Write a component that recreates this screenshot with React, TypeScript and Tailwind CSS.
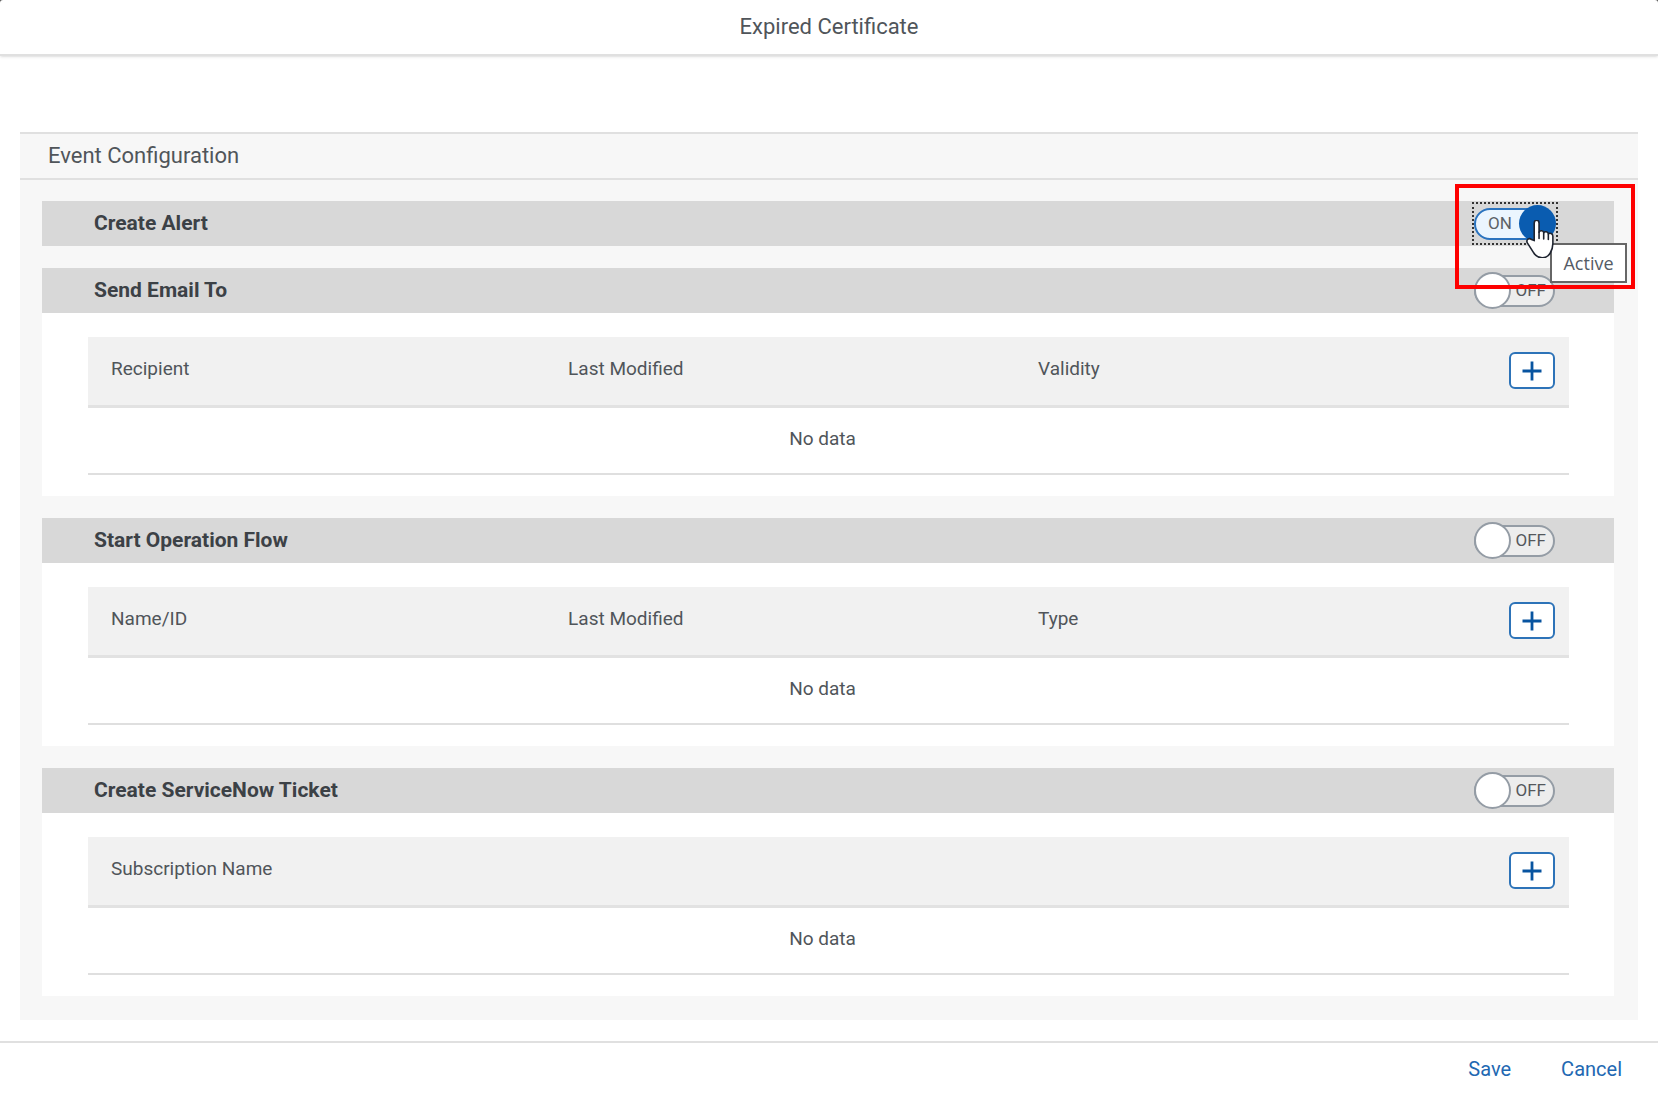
import React, { useState } from "react";

type Section = { title: string; columns: string[] };

const sections: Section[] = [
  { title: "Send Email To", columns: ["Recipient", "Last Modified", "Validity"] },
  { title: "Start Operation Flow", columns: ["Name/ID", "Last Modified", "Type"] },
  { title: "Create ServiceNow Ticket", columns: ["Subscription Name", "", ""] },
];

function Toggle({ label, initial = false }: { label: string; initial?: boolean }) {
  const [on, setOn] = useState(initial);
  return (
    <label className="relative flex h-[37px] w-[81px] cursor-pointer items-center">
      <input
        type="checkbox"
        role="switch"
        aria-label={label}
        checked={on}
        onChange={() => setOn(!on)}
        className="sr-only"
      />
      {on ? (
        <span className="flex h-8 w-full items-center rounded-full border-2 border-[#2a73bf] bg-[#ebf5fe] pl-3 text-[17px] text-[#5b6167]">
          ON
        </span>
      ) : (
        <span className="flex h-8 w-full items-center justify-end rounded-full border-2 border-[#949ca5] bg-[#ededed] pr-[7px] text-[17px] text-[#54585c]">
          OFF
        </span>
      )}
      {on ? (
        <span className="absolute -right-px top-0 size-[37px] rounded-full bg-[#0a5cb0]" />
      ) : (
        <span className="absolute left-0 top-0 size-[37px] rounded-full border-2 border-[#949ca5] bg-white" />
      )}
    </label>
  );
}

function Pointer() {
  return (
    <svg viewBox="0 1 28 36" className="absolute left-[51px] top-[15px] h-[38px] w-[30px]" aria-hidden="true">
      <path
        d="M8.5 20.5V4c0-3.600 4.600-3.600 4.600 0v8.500c.6-1.800 4.200-1.700 4.400.6.900-1.600 4.200-1.200 4.400 1.100 1.300-1.300 4.300-.5 4.300 2.100v7c0 4-.9 6.200-2.600 9.200-1.500 2.700-4 4.300-7.600 4.300-4.200 0-6.500-2-8.400-5.300L2 22.700c-1.500-3 1.700-5.200 4-3.200z"
        fill="#fff"
        stroke="#1e2430"
        strokeWidth="1.500"
        strokeLinejoin="round"
      />
      <path d="M13.100 12.500v6M17.500 13.500v5.500M21.900 14.500v5" stroke="#1e2430" strokeWidth="1.500" strokeLinecap="round" />
    </svg>
  );
}

function Bar({ title, children }: { title: string; children: React.ReactNode }) {
  return (
    <div className="flex h-[45px] items-center justify-between bg-[#d8d8d8] pl-[52px] pr-[59px]">
      <h3 className="pb-0.5 text-[21px] font-bold leading-6 text-[#3c4146]">{title}</h3>
      {children}
    </div>
  );
}

function EventTable({ section }: { section: Section }) {
  return (
    <table className="w-full table-fixed border-collapse text-[19px] leading-6 text-[#50555a]">
      <thead>
        <tr className="h-[69px] border-b-[3px] border-[#e2e2e2] bg-[#f1f1f1]">
          <th scope="col" className="w-[31%] pb-1 pl-[23px] text-left font-normal">{section.columns[0]}</th>
          <th scope="col" className="w-[32%] pb-1 pl-[21px] text-left font-normal">{section.columns[1]}</th>
          <th scope="col" className="pb-1 pl-[17px] text-left font-normal">{section.columns[2]}</th>
          <th scope="col" className="w-20 pr-3.5">
            <button
              type="button"
              aria-label={`Add to ${section.title}`}
              className="ml-auto flex h-[37px] w-[46px] items-center justify-center rounded-md border-2 border-[#2d73b8] bg-white"
            >
              <svg viewBox="0 0 20 20" className="size-5" aria-hidden="true">
                <path d="M10 0.500v19M0.500 10h19" stroke="#0854a0" strokeWidth="2.800" />
              </svg>
            </button>
          </th>
        </tr>
      </thead>
      <tbody>
        <tr className="h-[68px] border-b-2 border-[#dfdfdf]">
          <td colSpan={4} className="pb-0.5 pr-3 text-center">No data</td>
        </tr>
      </tbody>
    </table>
  );
}

export default function App() {
  return (
    <div className="min-h-screen bg-[#555] font-['Roboto',sans-serif]">
      <div className="flex min-h-screen flex-col rounded-t-[3px] bg-white">
        <header className="flex h-14 items-center justify-center border-b-2 border-[#e0e0e0] shadow-sm">
          <h1 className="text-[22px] leading-6 text-[#50555a]">Expired Certificate</h1>
        </header>
        <main className="grow px-5 pb-[21px] pt-[76px]">
          <section className="border-t-2 border-[#e0e0e0] bg-[#f7f7f7]">
            <h2 className="flex h-[46px] items-center border-b-2 border-[#e0e0e0] pl-7 text-[22px] leading-6 text-[#50555a]">
              Event Configuration
            </h2>
            <div className="flex flex-col gap-[22px] pb-6 pl-[22px] pr-6 pt-[21px]">
              <Bar title="Create Alert">
                <div className="relative z-10">
                  <Toggle label="Create Alert" initial />
                  <span className="pointer-events-none absolute -left-0.5 -top-[3px] h-[43px] w-[86px] border-2 border-dotted border-[#333]" />
                  <span className="pointer-events-none absolute -left-[19px] -top-[21px] h-[105px] w-[180px] border-4 border-[#fe0000]" />
                  <div
                    role="tooltip"
                    className="absolute left-[76px] top-[38px] flex h-[40px] w-[77px] items-center justify-center border-2 border-[#666] bg-white font-['Open_Sans',sans-serif] text-[18px] text-[#555b66]"
                  >
                    Active
                  </div>
                  <Pointer />
                </div>
              </Bar>
              {sections.map((section) => (
                <section key={section.title} className="bg-white">
                  <Bar title={section.title}>
                    <Toggle label={section.title} />
                  </Bar>
                  <div className="pb-[21px] pl-[46px] pr-[45px] pt-6">
                    <EventTable section={section} />
                  </div>
                </section>
              ))}
            </div>
          </section>
        </main>
        <footer className="flex h-[53px] items-center justify-end gap-[50px] border-t-2 border-[#e0e0e0] pr-9 text-[20px] leading-6 text-[#2268b2]">
          <button type="button">Save</button>
          <button type="button">Cancel</button>
        </footer>
      </div>
    </div>
  );
}
